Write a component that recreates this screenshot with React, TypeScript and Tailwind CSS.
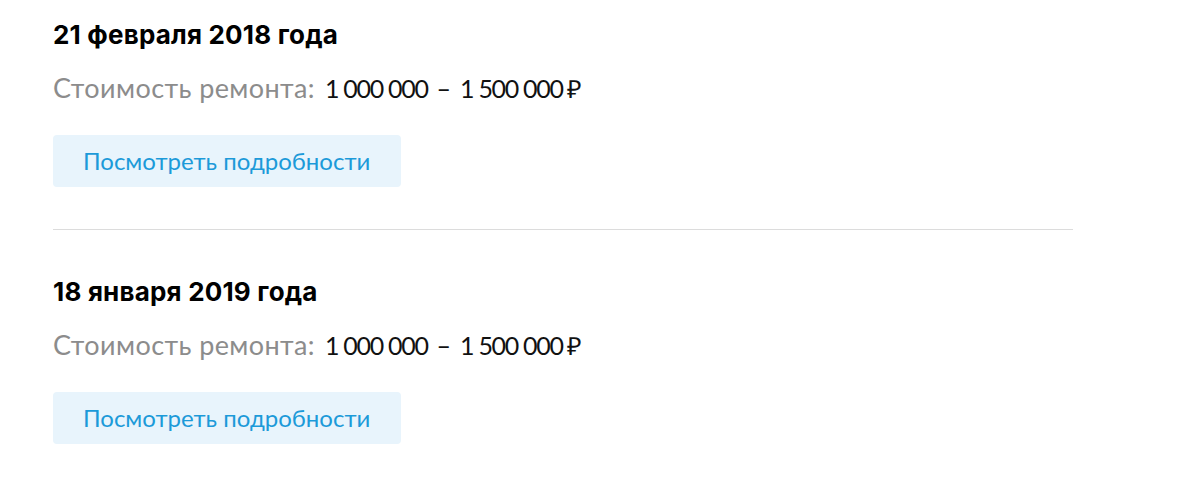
import React from "react";

const items = [
  { date: "21 февраля 2018 года", from: "1 000 000", to: "1 500 000" },
  { date: "18 января 2019 года", from: "1 000 000", to: "1 500 000" },
];

const RepairItem = ({ date, from, to }: { date: string; from: string; to: string }) => {
  return (
    <div>
      <h2 className="h-[36px] text-[26px] leading-[36px] font-bold tracking-[0.2px] text-black font-['Inter',sans-serif]">
        {date}
      </h2>
      <p className="mt-[17px] h-[36px] leading-[36px] font-['Lato',sans-serif] whitespace-nowrap">
        <span className="text-[27px] tracking-[0.4px] text-[#8c8c8c]">Стоимость ремонта:</span>
        <span className="ml-[10px] text-[25px] tracking-[-1.3px] text-[#111]">{from}</span>
        <span className="mx-[9px] text-[25px] text-[#111]">–</span>
        <span className="text-[25px] tracking-[-1.3px] text-[#111]">{to}</span>
        <span className="ml-[4px] text-[25px] text-[#111]">₽</span>
      </p>
      <button
        className="mt-[29px] h-[52px] w-[348px] rounded-[4px] bg-[#e8f4fc] text-left pl-[30px] text-[24px] text-[#1c9ad9] font-['Lato',sans-serif]"
        type="button"
      >
        Посмотреть подробности
      </button>
    </div>
  );
};

const App = () => {
  return (
    <div className="min-h-[495px] w-[1200px] bg-white pt-[17px] pl-[53px]">
      <RepairItem {...items[0]} />
      <div className="mt-[42px] h-px w-[1020px] bg-[#dcdcdc]" />
      <div className="mt-[44px]">
        <RepairItem {...items[1]} />
      </div>
    </div>
  );
};

export default App;
